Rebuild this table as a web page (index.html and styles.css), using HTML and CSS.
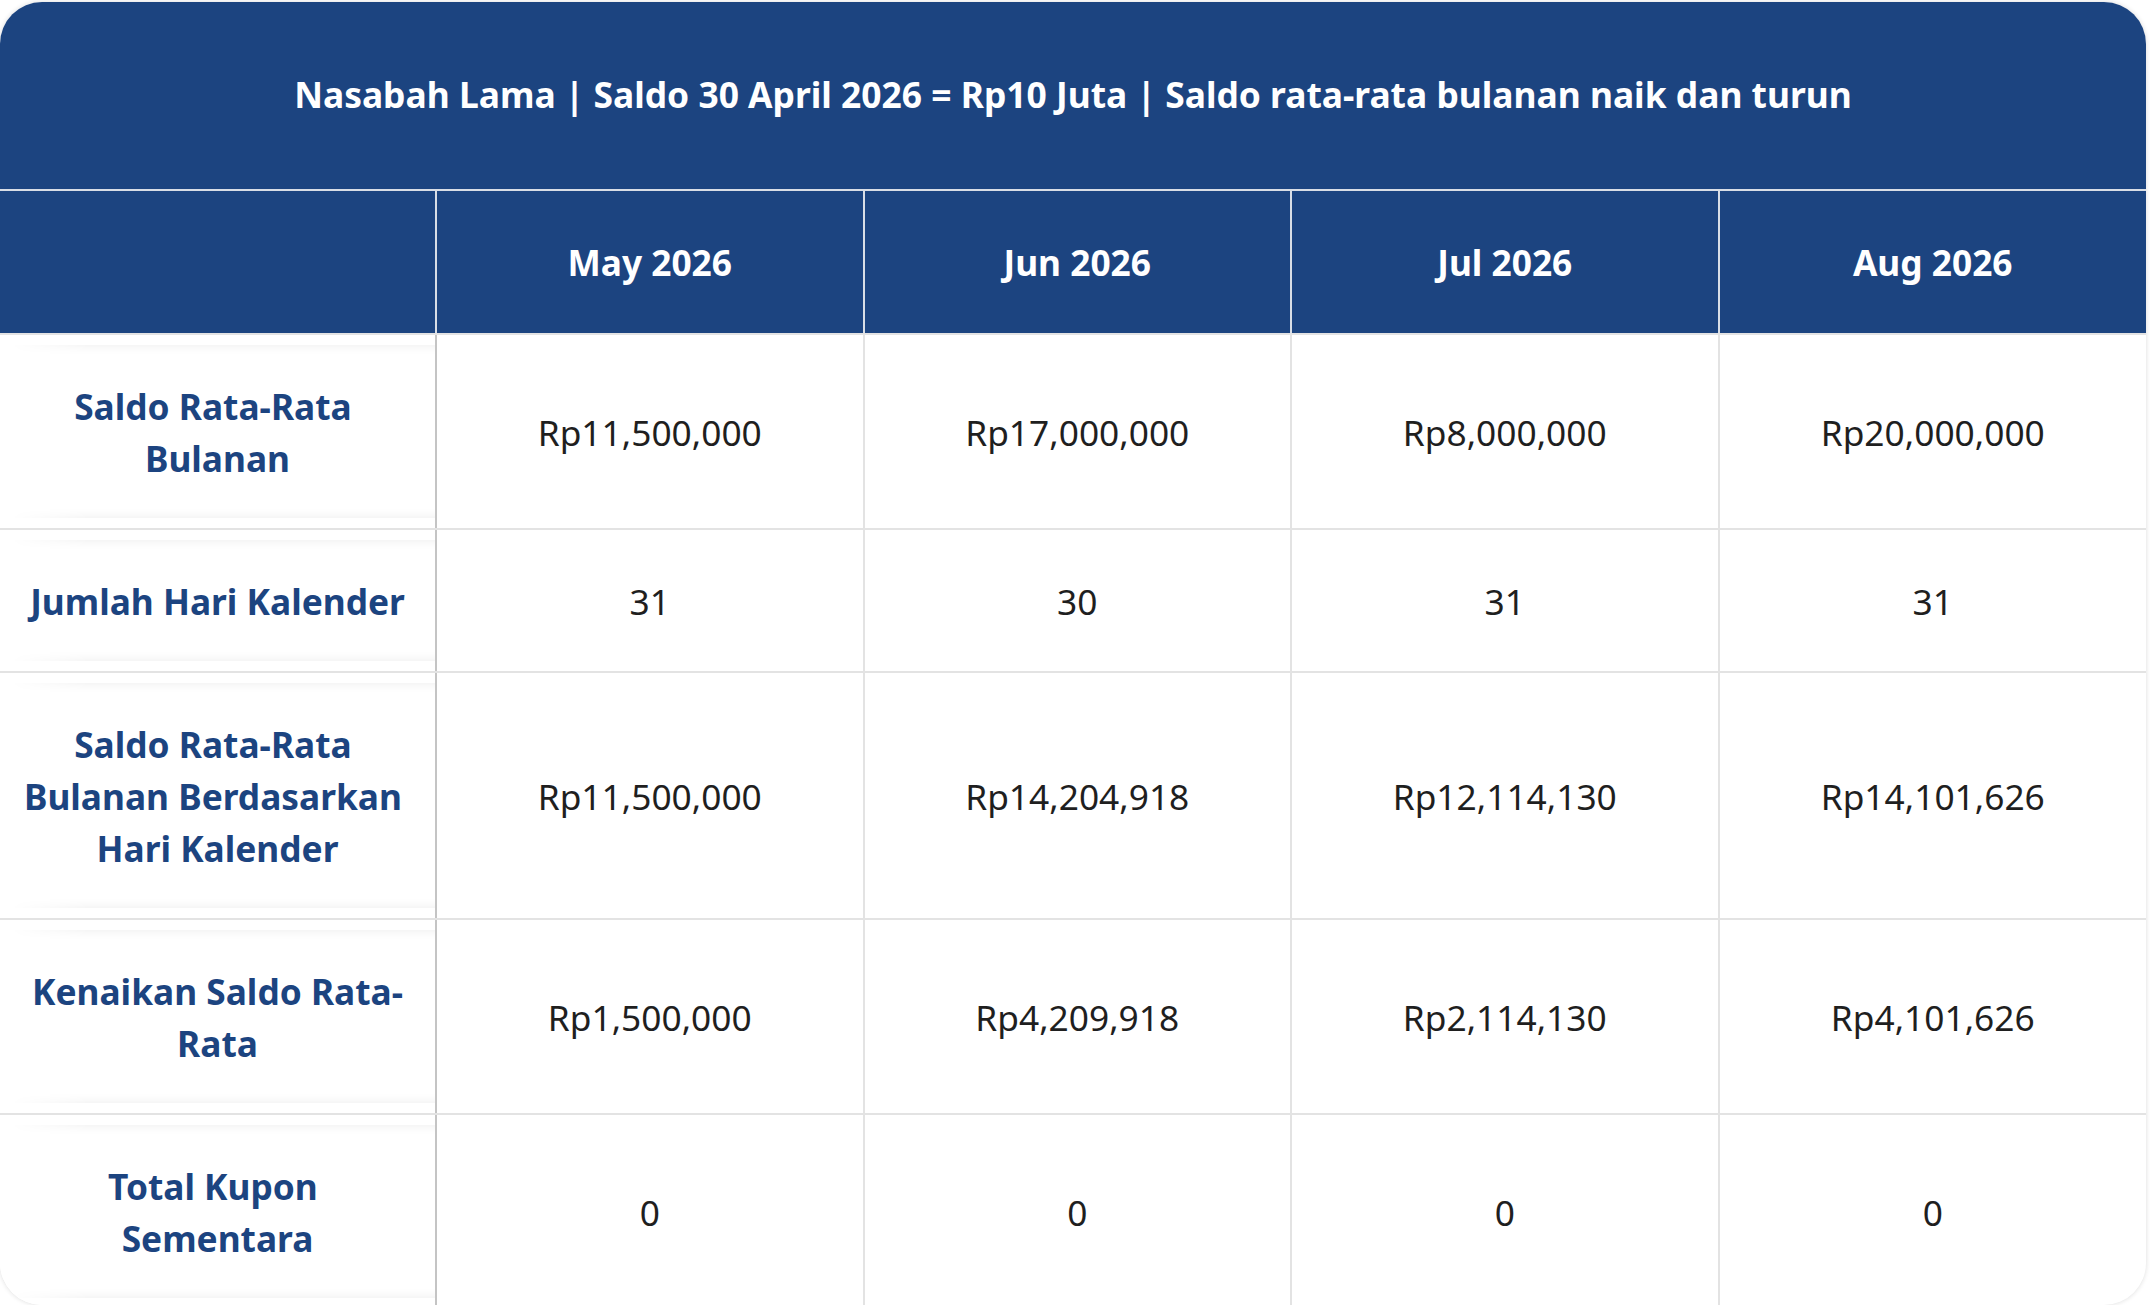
FILE: index.html
```html
<!DOCTYPE html>
<html lang="id">
<head>
<meta charset="utf-8">
<title>Simulasi Kupon</title>
<link rel="stylesheet" href="styles.css">
</head>
<body>
<div class="page">
  <div class="card">
    <table class="grid">
      <colgroup>
        <col class="c-label">
        <col><col><col><col>
      </colgroup>
      <thead>
        <tr>
          <th colspan="5" class="title">Nasabah Lama | Saldo 30 April 2026 = Rp10 Juta | Saldo rata-rata bulanan naik dan turun</th>
        </tr>
        <tr class="months">
          <th></th>
          <th>May 2026</th>
          <th>Jun 2026</th>
          <th>Jul 2026</th>
          <th>Aug 2026</th>
        </tr>
      </thead>
      <tbody>
        <tr>
          <th class="label" scope="row">Saldo Rata-Rata Bulanan</th>
          <td>Rp11,500,000</td>
          <td>Rp17,000,000</td>
          <td>Rp8,000,000</td>
          <td>Rp20,000,000</td>
        </tr>
        <tr>
          <th class="label" scope="row">Jumlah Hari Kalender</th>
          <td>31</td>
          <td>30</td>
          <td>31</td>
          <td>31</td>
        </tr>
        <tr>
          <th class="label" scope="row">Saldo Rata-Rata Bulanan Berdasarkan Hari Kalender</th>
          <td>Rp11,500,000</td>
          <td>Rp14,204,918</td>
          <td>Rp12,114,130</td>
          <td>Rp14,101,626</td>
        </tr>
        <tr>
          <th class="label" scope="row">Kenaikan Saldo Rata-Rata</th>
          <td>Rp1,500,000</td>
          <td>Rp4,209,918</td>
          <td>Rp2,114,130</td>
          <td>Rp4,101,626</td>
        </tr>
        <tr>
          <th class="label" scope="row">Total Kupon Sementara</th>
          <td>0</td>
          <td>0</td>
          <td>0</td>
          <td>0</td>
        </tr>
      </tbody>
    </table>
  </div>
</div>
</body>
</html>
```
FILE: styles.css
```css
html, body {
  margin: 0;
  padding: 0;
  background: #ffffff;
}

.page {
  padding: 2px 4px 0 0;
}

.card {
  height: 1303px;
  border-radius: 42px;
  overflow: hidden;
  background: #ffffff;
  box-shadow: 0 0 5px rgba(0, 0, 0, 0.14);
  font-family: "Noto Sans", "Open Sans", sans-serif;
}

.grid {
  width: 2146px;
  border-collapse: collapse;
  table-layout: fixed;
  font-size: 35.3px;
  line-height: 52px;
}

.c-label {
  width: 436px;
}

.title {
  background: #1c4480;
  color: #ffffff;
  font-weight: 700;
  font-size: 35.4px;
  text-align: center;
  padding: 66px 20px 69px;
  border-bottom: 2px solid #d9dee6;
}

.months th {
  background: #1c4480;
  color: #ffffff;
  font-weight: 700;
  text-align: center;
  padding: 45px 10px;
  border-right: 2px solid #d9dee6;
  border-bottom: 2px solid #e3e3e3;
}

.months th:last-child {
  border-right: 0;
}

tbody td {
  padding: 44.5px 10px;
  text-align: center;
  font-weight: 400;
  color: #1f1f1f;
  border-right: 2px solid #e3e3e3;
  border-bottom: 2px solid #e3e3e3;
}

tbody td:last-child {
  border-right: 0;
}

.label {
  position: relative;
  z-index: 1;
  padding: 44.5px 18px;
  color: #1c4480;
  font-weight: 700;
  text-align: center;
  white-space: break-spaces;
  background: #ffffff;
  border-right: 2px solid #c4c4c4;
  border-bottom: 2px solid #e3e3e3;
  box-shadow: 10px 0 18px -8px rgba(0, 0, 0, 0.16);
  clip-path: inset(0 -40px 0 0);
}

.label::before {
  content: "";
  position: absolute;
  top: 10px;
  bottom: 10px;
  left: 0;
  right: 0;
  pointer-events: none;
  box-shadow: inset 0 12px 10px -10px rgba(0, 0, 0, 0.06),
              inset 0 -12px 10px -10px rgba(0, 0, 0, 0.06);
  -webkit-mask-image: linear-gradient(to right, transparent 10px, #000 90px);
  mask-image: linear-gradient(to right, transparent 10px, #000 90px);
}
```
